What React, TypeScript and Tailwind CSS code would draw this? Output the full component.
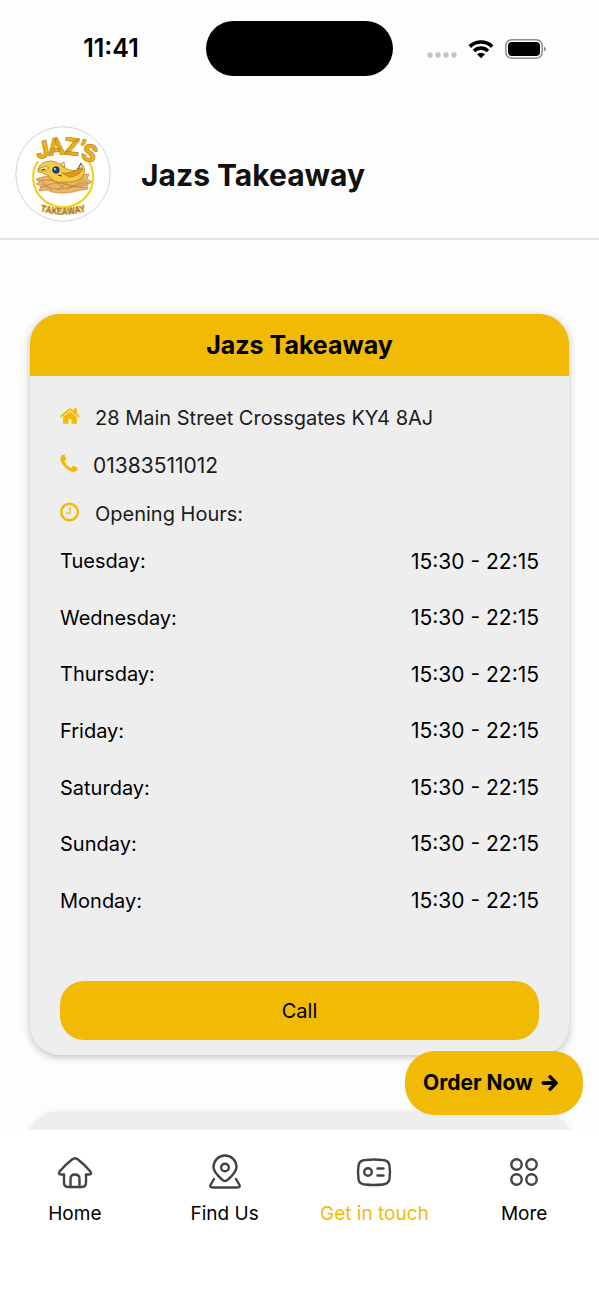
import { ReactNode, useState } from 'react';

import { FaArrowRight } from 'react-icons/fa';

interface IOpeningHour {
  day: string;
  hours: string;
}

const openingHours: IOpeningHour[] = [
  { day: 'Tuesday', hours: '15:30 - 22:15' },
  { day: 'Wednesday', hours: '15:30 - 22:15' },
  { day: 'Thursday', hours: '15:30 - 22:15' },
  { day: 'Friday', hours: '15:30 - 22:15' },
  { day: 'Saturday', hours: '15:30 - 22:15' },
  { day: 'Sunday', hours: '15:30 - 22:15' },
  { day: 'Monday', hours: '15:30 - 22:15' },
];

const StatusBar = () => (
  <div className="grid h-24 shrink-0 grid-cols-[1fr_187px_1fr] items-center">
    <span className="ml-4 pt-0.5 text-center text-[25px] font-semibold">11:41</span>
    <div className="h-[55px] rounded-full bg-black" />
    <div className="flex items-center justify-center gap-[11px] pt-px pr-5">
      <svg viewBox="0 0 30 6" className="mt-3 h-[6px] w-[30px] shrink-0" fill="#c4c4c4">
        <circle cx="3" cy="3" r="2.7" />
        <circle cx="11" cy="3" r="2.7" />
        <circle cx="19" cy="3" r="2.7" />
        <circle cx="27" cy="3" r="2.7" />
      </svg>
      <svg viewBox="0 0 26 20" className="h-5 w-[26px] shrink-0" fill="none" stroke="#000" strokeWidth="3.6">
        <path d="M1.8 7.6a16 16 0 0 1 22.4 0" />
        <path d="M6 12a10 10 0 0 1 14 0" />
        <path d="M13 19.2l-4-3.9a5.8 5.8 0 0 1 8 0z" fill="#000" stroke="none" />
      </svg>
      <svg viewBox="0 0 41 20" className="h-5 w-[41px] shrink-0">
        <rect x="0.8" y="0.8" width="36.4" height="18.4" rx="6" fill="none" stroke="#8d8d8d" strokeWidth="1.5" />
        <rect x="3" y="3" width="32" height="14" rx="4" />
        <path d="M39 7.5q2 1 2 2.5t-2 2.5z" fill="#8d8d8d" />
      </svg>
    </div>
  </div>
);

const Logo = () => (
  <svg viewBox="0 0 96 96" className="size-24 shrink-0" role="img" aria-label="Jaz's Takeaway logo">
    <circle cx="48" cy="48" r="47.2" fill="#fff" stroke="#d3d3d3" />
    <path d="M23 35a30 30 0 1 0 51 1" fill="none" stroke="#efd21f" strokeWidth="2.2" />
    <g
      fill="#eeb211"
      stroke="#c09024"
      strokeWidth="0.8"
      textAnchor="middle"
      className="font-['Roboto','Liberation_Sans',sans-serif] text-[24px] font-black"
    >
      <text transform="translate(29 32) rotate(-11)">J</text>
      <text transform="translate(42 29) rotate(-6)">A</text>
      <text transform="translate(56 29) rotate(6)">Z</text>
      <text transform="translate(65 31) rotate(14)">’</text>
      <text transform="translate(72 35) rotate(18)">S</text>
    </g>
    {/* nest */}
    <g stroke="#b97935" strokeWidth="0.6">
      <path d="M21 53q9-4 20-3t33-2l-2 5 5 3-5 3 1 4-7 1q-15 5-29 2l-5-2-8 1 2-5-5-2 4-2z" fill="#e9b566" />
      <path d="M22 55q17-3 27 3t24-1M25 62q15-7 26-4t19 4M27 58q9 6 19 5t26-8M35 53q8 3 14 9M55 53q-4 6-13 11M68 52q-6 8-16 11M26 54l11 11" fill="none" />
    </g>
    {/* bird */}
    <g stroke="#a77b24" strokeWidth="0.7">
      <path d="M23 43q3-8 13-8 7 0 12 6 10 6 17 2 3-2 1-6 6 6 2 13-6 7-18 6-12 2-17-7-3 0-5-2l-5-1z" fill="#f4cd43" />
      <path d="M23 43l8-3 3 2-4 3-6-1zM45 38l4-2 1 6z" fill="#f6e39a" />
      <path d="M47 47q9 1 17-5l4 1q-5 8-14 8z" fill="#e5971d" />
    </g>
    <circle cx="41" cy="44" r="3.2" fill="#174a9b" stroke="#102a51" />
    <circle cx="40" cy="43" r="0.9" fill="#fff" />
    <path d="M43 49l4 1M66 37l-3 6M30 43l-3 1" stroke="#39331d" />
    <defs>
      <path id="logo-arc" d="M20 83q28 11 56 0" />
    </defs>
    <text
      fill="#d6a61c"
      stroke="#9c7a25"
      strokeWidth="0.4"
      textAnchor="middle"
      className="font-['Roboto','Liberation_Sans',sans-serif] text-[9px] font-black"
    >
      <textPath href="#logo-arc" startOffset="50%">TAKEAWAY</textPath>
    </text>
  </svg>
);

const HomeIcon = () => (
  <svg viewBox="0 0 1664 1792" className="h-[22px] w-5" fill="currentColor">
    <path d="M1408 992v480q0 26-19 45t-45 19h-384v-384h-256v384h-384q-26 0-45-19t-19-45v-480q0-1 .5-3t.5-3l575-474 575 474q1 2 1 6zm223-69l-62 74q-8 9-21 11h-3q-13 0-21-7l-692-577-692 577q-12 8-24 7-13-2-21-11l-62-74q-8-10-7-23.500t11-21.500l719-599q32-26 76-26t76 26l244 204v-195q0-14 9-23t23-9h192q14 0 23 9t9 23v408l219 182q10 8 11 21.500t-7 23.500z" />
  </svg>
);

const PhoneIcon = () => (
  <svg viewBox="0 0 1408 1792" className="h-[22px] w-[18px]" fill="currentColor">
    <path d="M1408 1240q0 27-10 70.500t-21 68.500q-21 50-122 106-94 51-186 51-27 0-53-3.500t-57.500-12.500-47-14.500-55.500-20.500-49-18q-98-35-175-83-127-79-264-216t-216-264q-48-77-83-175-3-9-18-49t-20.500-55.500-14.500-47-12.500-57.500-3.500-53q0-92 51-186 56-101 106-122 25-11 68.500-21t70.500-10q14 0 21 3 18 6 53 76 11 19 30 54t35 63.500 31 53.500q3 4 17.500 25t21.500 35.500 7 28.500q0 20-28.500 50t-62 55-62 53-28.500 46q0 9 5 22.500t8.500 20.500 14 24 11.500 19q76 137 174 235t235 174q2 1 19 11.500t24 14 20.500 8.500 22.500 5q18 0 46-28.500t53-62 55-62 50-28.500q14 0 28.500 7t35.500 21.500 25 17.500q25 15 53.500 31t63.500 35 54 30q70 35 76 53 3 7 3 21z" />
  </svg>
);

const ClockIcon = () => (
  <svg viewBox="0 0 20 22" className="h-[22px] w-5" fill="none" stroke="currentColor">
    <circle cx="9.5" cy="11" r="8.3" strokeWidth="2.4" />
    <path d="M10.2 6.3v5.8H6" strokeWidth="1.3" />
  </svg>
);

const InfoRow = ({ icon, children }: { icon: ReactNode; children: ReactNode }) => (
  <li className="flex h-8 items-center gap-[15px]">
    <span className="mb-1 text-[#f0ba05]">{icon}</span>
    {children}
  </li>
);

const ContactCard = () => (
  <section className="shrink-0 overflow-hidden rounded-[30px] bg-[#eee] shadow-[0_2px_8px_rgba(0,0,0,0.25)]">
    <h2 className="bg-[#f0ba05] text-center text-[25px] leading-[62px] font-bold">Jazs Takeaway</h2>
    <div className="px-[30px] pt-[26px] pb-[15px] text-xl">
      <ul className="flex flex-col gap-4 text-[#1b1b1b]">
        <InfoRow icon={<HomeIcon />}>28 Main Street Crossgates KY4 8AJ</InfoRow>
        <InfoRow icon={<PhoneIcon />}>
          <a href="tel:01383511012" className="text-[21px]">
            01383511012
          </a>
        </InfoRow>
        <InfoRow icon={<ClockIcon />}>Opening Hours:</InfoRow>
      </ul>
      <table className="mt-[3px] h-[396px] w-full">
        <tbody>
          {openingHours.map(({ day, hours }) => (
            <tr key={day}>
              <th scope="row" className="text-left font-normal">
                {day}:
              </th>
              <td className="text-right text-[21px]">{hours}</td>
            </tr>
          ))}
        </tbody>
      </table>
      <button className="mt-[52px] h-[59px] w-full rounded-3xl bg-[#f0ba05]">Call</button>
    </div>
  </section>
);

const tabs: { label: string; icon: ReactNode }[] = [
  {
    label: 'Home',
    icon: (
      <>
        <path d="M7 20.500v8q0 4.500 4 4.500h14q4 0 4-4.500v-8h3q3.500 0 1-3.500-5-6-12-11.500-3-2.500-6 0Q8 11 3 17q-2.500 3.500 1 3.500z" />
        <path d="M13.500 33v-8q0-4.500 4.500-4.500t4.500 4.500v8" />
      </>
    ),
  },
  {
    label: 'Find Us',
    icon: (
      <>
        <path d="M15 25.500C11 22 6.500 18 6.500 13a11.500 11.500 0 0 1 23 0c0 5-4.500 9-8.500 12.500q-3 3-6 0z" />
        <circle cx="18" cy="13.500" r="3.800" />
        <path d="M7 25l-3.500 6q-1 2.500 2 2.500h25q3 0 2-2.500L29 25" />
      </>
    ),
  },
  {
    label: 'Get in touch',
    icon: (
      <>
        <path d="M10 6q8-1 16 0 7 0 7.500 6 1 6 0 13-1 5-6.500 5.500-9 1-18 0Q3 30 2.500 25q-1-7 0-13Q3 6 10 6z" />
        <circle cx="12" cy="18" r="3.800" />
        <path d="M21.500 14.500h6M21.500 21.500h6" />
      </>
    ),
  },
  {
    label: 'More',
    icon: (
      <>
        <circle cx="10.500" cy="10.500" r="5.200" />
        <circle cx="25.500" cy="10.500" r="5.200" />
        <circle cx="10.500" cy="25.500" r="5.200" />
        <circle cx="25.500" cy="25.500" r="5.200" />
      </>
    ),
  },
];

const App = () => {
  const [activeTab, setActiveTab] = useState<string>('Get in touch');

  return (
    <div className="flex h-screen flex-col bg-[#fdfdfd] font-['Inter','Liberation_Sans',sans-serif] text-black">
      <StatusBar />
      <header className="flex shrink-0 items-center gap-[30px] border-b-2 border-[#e4e4e4] px-[15px] pt-[30px] pb-4">
        <Logo />
        <h1 className="pt-0.5 text-[30px] leading-10 font-bold text-[#111]">Jazs Takeaway</h1>
      </header>
      <div className="relative min-h-0 flex-1">
        <main className="flex h-full flex-col gap-[58px] overflow-y-auto px-[30px] pt-[74px] [scrollbar-width:none]">
          <ContactCard />
          <section className="h-40 shrink-0 rounded-[30px] bg-[#eee] shadow-[0_2px_8px_rgba(0,0,0,0.25)]" />
        </main>
        <button className="absolute right-4 bottom-[15px] flex h-16 w-[178px] items-center gap-2 rounded-[30px] bg-[#f0ba05] pl-[18px] text-[21px] font-bold whitespace-nowrap">
          Order Now
          <FaArrowRight className="size-[18px]" stroke="currentColor" strokeWidth="24" />
        </button>
      </div>
      <nav className="grid shrink-0 grid-cols-4 bg-white pt-6 pb-[74px]">
        {tabs.map(({ label, icon }) => (
          <button
            key={label}
            className="flex flex-col items-center gap-3"
            onClick={() => setActiveTab(label)}
          >
            <svg viewBox="0 0 36 36" className="size-9" fill="none" stroke="#3f4348" strokeWidth="2.400" strokeLinecap="round" strokeLinejoin="round">
              {icon}
            </svg>
            <span
              className={`text-[19px] leading-6 whitespace-nowrap ${activeTab === label ? 'text-[#f0ba05]' : 'text-black'}`}
            >
              {label}
            </span>
          </button>
        ))}
      </nav>
    </div>
  );
};

export default App;
